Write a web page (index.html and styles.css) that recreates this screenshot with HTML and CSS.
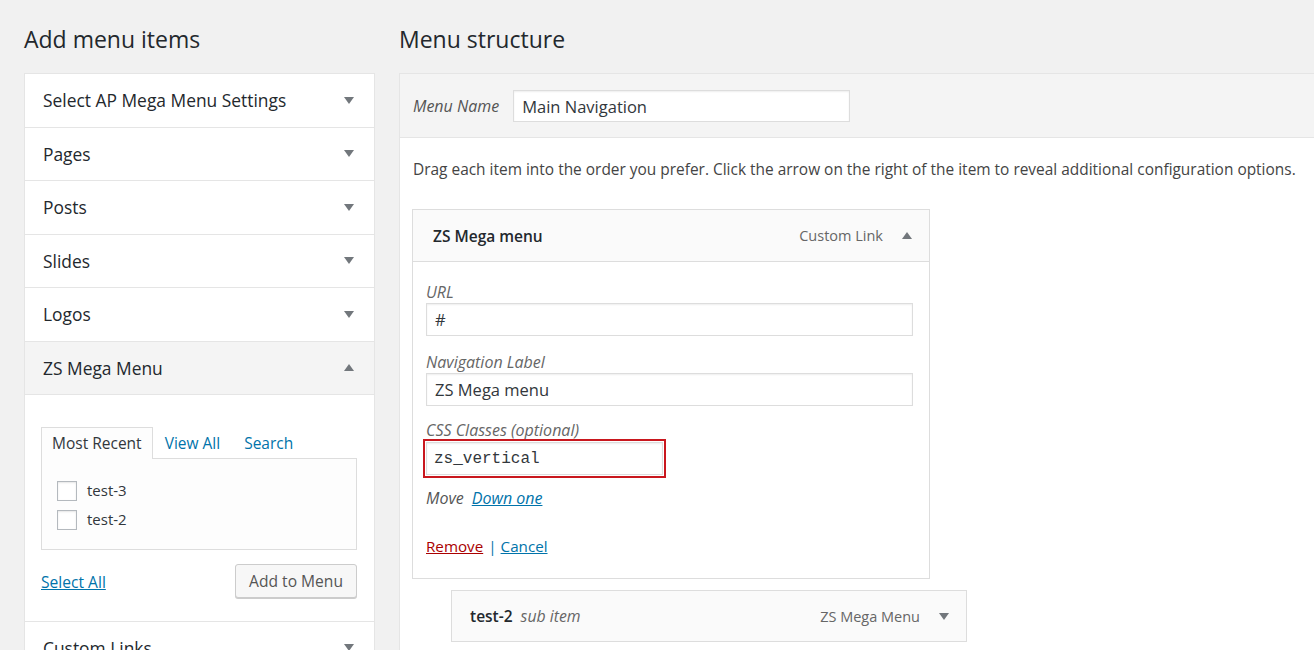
FILE: index.html
```html
<!DOCTYPE html>
<html lang="en">
<head>
<meta charset="utf-8">
<title>Menus</title>
<link rel="stylesheet" href="styles.css">
</head>
<body>
<div class="page">
  <div class="col-left">
    <h2 class="title">Add menu items</h2>
    <div class="acc">
      <div class="acc-head"><span>Select AP Mega Menu Settings</span><svg class="arr" width="10" height="7" viewBox="0 0 10 7"><path d="M0 0H10L5 7Z"/></svg></div>
      <div class="acc-head"><span>Pages</span><svg class="arr" width="10" height="7" viewBox="0 0 10 7"><path d="M0 0H10L5 7Z"/></svg></div>
      <div class="acc-head"><span>Posts</span><svg class="arr" width="10" height="7" viewBox="0 0 10 7"><path d="M0 0H10L5 7Z"/></svg></div>
      <div class="acc-head"><span>Slides</span><svg class="arr" width="10" height="7" viewBox="0 0 10 7"><path d="M0 0H10L5 7Z"/></svg></div>
      <div class="acc-head"><span>Logos</span><svg class="arr" width="10" height="7" viewBox="0 0 10 7"><path d="M0 0H10L5 7Z"/></svg></div>
      <div class="acc-head open"><span>ZS Mega Menu</span><svg class="arr" width="10" height="7" viewBox="0 0 10 7"><path d="M0 7H10L5 0Z"/></svg></div>
      <div class="acc-body">
        <div class="tabs">
          <span class="tab active">Most Recent</span>
          <a class="tab" href="#">View All</a>
          <a class="tab" href="#">Search</a>
        </div>
        <div class="panel">
          <label class="check"><input type="checkbox"><span>test-3</span></label>
          <label class="check"><input type="checkbox"><span>test-2</span></label>
        </div>
        <div class="actions">
          <a class="select-all" href="#">Select All</a>
          <button class="btn" type="button">Add to Menu</button>
        </div>
      </div>
      <div class="acc-head"><span>Custom Links</span><svg class="arr" width="10" height="7" viewBox="0 0 10 7"><path d="M0 0H10L5 7Z"/></svg></div>
    </div>
  </div>

  <div class="col-right">
    <h2 class="title">Menu structure</h2>
    <div class="menu-box">
      <div class="menu-head">
        <span class="menu-name-label">Menu Name</span>
        <input class="field name-field" type="text" value="Main Navigation">
      </div>
      <div class="menu-body">
        <p class="drag">Drag each item into the order you prefer. Click the arrow on the right of the item to reveal additional configuration options.</p>
        <div class="item">
          <div class="item-head">
            <span class="item-title">ZS Mega menu</span>
            <span class="item-type">Custom Link</span>
            <svg class="arr item-arr" width="10" height="7" viewBox="0 0 10 7"><path d="M0 7H10L5 0Z"/></svg>
          </div>
          <div class="item-settings">
            <div class="fld">
              <label class="fld-label">URL</label>
              <input class="field wide" type="text" value="#">
            </div>
            <div class="fld fld2">
              <label class="fld-label">Navigation Label</label>
              <input class="field wide" type="text" value="ZS Mega menu">
            </div>
            <div class="fld fld3">
              <label class="fld-label">CSS Classes (optional)</label>
              <input class="field css-field" type="text" value="zs_vertical">
            </div>
            <div class="move"><span class="move-label">Move</span><a href="#" class="move-link">Down one</a></div>
            <div class="item-actions"><a href="#" class="remove">Remove</a><span class="sep">|</span><a href="#" class="cancel">Cancel</a></div>
          </div>
        </div>
        <div class="item sub">
          <div class="item-head">
            <span class="item-title">test-2</span><span class="sub-note">sub item</span>
            <span class="item-type">ZS Mega Menu</span>
            <svg class="arr item-arr" width="10" height="7" viewBox="0 0 10 7"><path d="M0 0H10L5 7Z"/></svg>
          </div>
        </div>
      </div>
    </div>
  </div>
</div>
</body>
</html>
```

FILE: styles.css
```css
* { box-sizing: border-box; }
html, body { margin: 0; overflow: hidden; }
body {
  background: #f1f1f1;
  font-family: "Open Sans", "Noto Sans", sans-serif;
  color: #444;
  font-size: 14px;
  width: 1314px;
  height: 650px;
}
.page { display: flex; gap: 24px; padding-left: 24px; }
.col-left { width: 351px; flex: none; }
.col-right { width: 960px; flex: none; }

.title {
  font-size: 23px;
  font-weight: 400;
  line-height: 32px;
  margin: 23px 0 18px;
  color: #23282d;
}

.arr { fill: #72777c; flex: none; display: block; }

/* left accordion */
.acc { background: #fff; border: 1px solid #e5e5e5; }
.acc-head {
  display: flex;
  align-items: center;
  justify-content: space-between;
  height: 53.5px;
  padding: 0 20px 0 18px;
  border-bottom: 1px solid #e5e5e5;
  font-size: 17.4px;
  color: #23282d;
}
.acc-head.open { background: #f4f4f4; }
.acc-body { padding: 31.5px 17px 23px 16px; border-bottom: 1px solid #e5e5e5; }
.tabs { display: flex; align-items: flex-end; height: 31px; font-size: 15.5px; }
.tab { line-height: 30px; padding: 0 12px; color: #0073aa; text-decoration: none; }
.tab.active {
  color: #32373c;
  padding: 0 10px;
  border: 1px solid #ddd;
  border-bottom: none;
  background: #fdfdfd;
  height: 32px;
  margin-bottom: -1px;
  position: relative;
  z-index: 1;
}
.panel {
  border: 1px solid #ddd;
  background: #fdfdfd;
  height: 92px;
  padding: 22px 15px;
}
.check { display: flex; align-items: flex-start; height: 29px; font-size: 15px; color: #32373c; }
.check input {
  appearance: none;
  -webkit-appearance: none;
  width: 20px;
  height: 20px;
  margin: 0 10px 0 0;
  border: 1px solid #b4b9be;
  background: #fff;
  box-shadow: inset 0 1px 2px rgba(0,0,0,.1);
}
.check span { line-height: 19px; }
.actions { display: flex; justify-content: space-between; align-items: center; margin-top: 14px; }
.select-all { font-size: 15.6px; color: #0073aa; text-decoration: underline; margin-top: 2px; }
.btn {
  height: 34px;
  padding: 0 13px;
  font-family: inherit;
  font-size: 15.6px;
  color: #555;
  background: #f7f7f7;
  border: 1px solid #ccc;
  border-radius: 3px;
  box-shadow: 0 1px 0 #ccc;
}

/* right */
.menu-box { background: #fff; border: 1px solid #e5e5e5; }
.menu-head {
  display: flex;
  align-items: center;
  gap: 14px;
  background: #f4f4f4;
  border-bottom: 1px solid #e5e5e5;
  padding: 16px 13px 15px;
}
.menu-name-label { font-style: italic; font-size: 16px; color: #555; }
.field {
  font-family: inherit;
  border: 1px solid #ddd;
  background: #fff;
  box-shadow: inset 0 1px 2px rgba(0,0,0,.07);
  color: #32373c;
  padding: 0 8px;
  margin: 0;
  outline: none;
}
.name-field { width: 337px; height: 32px; font-size: 16.5px; }
.menu-body { padding: 21px 12px 20px; }
.drag { margin: 0 0 30px 1px; line-height: 20px; font-size: 15.45px; color: #444; }

.item { width: 518px; }
.item-head {
  display: flex;
  align-items: center;
  height: 53px;
  border: 1px solid #ddd;
  background: #fafafa;
  padding: 0 17px 0 20px;
}
.item-title { font-weight: 600; font-size: 15.5px; color: #23282d; }
.item-type { margin-left: auto; font-size: 14.5px; color: #666; }
.item-arr { margin-left: 19px; }
.item-settings {
  border: 1px solid #ddd;
  border-top: none;
  padding: 20px 16px 22px 13px;
}
.fld-label { display: block; font-style: italic; font-size: 16px; line-height: 20px; color: #666; }
.wide { width: 487px; height: 33px; margin-top: 1px; font-size: 16.5px; display: block; }
.fld2 { margin-top: 16px; }
.fld3 { margin-top: 14px; }
.css-field {
  display: block;
  width: 237px;
  height: 33px;
  margin-top: 2px;
  font-family: "Liberation Mono", "DejaVu Sans Mono", monospace;
  font-size: 16px;
  padding-left: 7px;
  outline: 2px solid #c9171e;
  outline-offset: 1px;
}
.move { margin-top: 13px; line-height: 20px; font-size: 16px; font-style: italic; }
.move-label { color: #555; }
.move-link { color: #0073aa; margin-left: 8px; text-decoration: underline; }
.item-actions { margin-top: 28px; line-height: 20px; font-size: 15.2px; }
.remove { color: #a00; text-decoration: underline; }
.sep { color: #0073aa; margin: 0 4px 0 5px; }
.cancel { color: #0073aa; text-decoration: underline; }

.item.sub { width: 516px; margin: 11px 0 0 39px; }
.item.sub .item-head { height: 52px; padding-left: 18px; }
.sub-note { font-style: italic; font-size: 15.8px; color: #666; margin-left: 8px; }
```
